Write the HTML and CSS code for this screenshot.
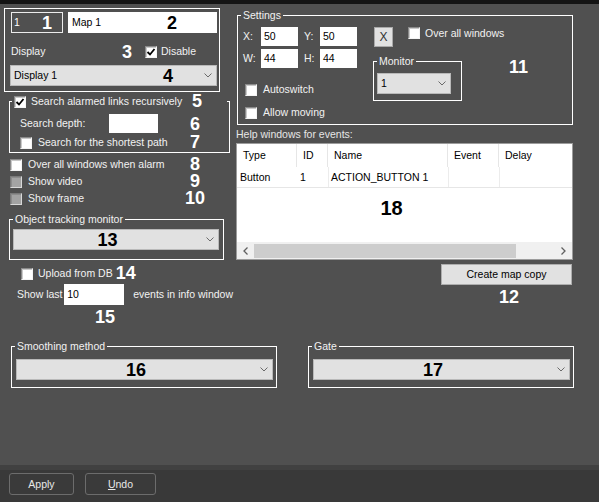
FILE: index.html
```html
<!DOCTYPE html>
<html lang="en">
<head>
<meta charset="utf-8">
<title>Map settings</title>
<link rel="stylesheet" href="styles.css">
</head>
<body>
<div class="page">
  <div class="topband"></div>
  <div class="main">
    <div class="leftcol">
      <div class="mapbox">
        <div class="r1">
          <div class="field dark"><span>1</span><span class="num wnum n1">1</span></div>
          <div class="field light"><span>Map 1</span><span class="num bnum n2">2</span></div>
        </div>
        <div class="r2">
          <span class="display-lbl">Display</span>
          <span class="num wnum numc">3</span>
          <span class="cb checked"><svg viewBox="0 0 10 10" width="10" height="10"><path d="M1.5 5 L4 7.5 L8.5 2" fill="none" stroke="#000" stroke-width="1.8"/></svg></span>
          <span class="cb-text">Disable</span>
        </div>
        <div class="combo combo-display">
          <span class="combo-val left">Display 1</span>
          <span class="num bnum n4">4</span>
          <span class="arrow"><svg viewBox="0 0 8 5" width="8" height="5"><polyline points="0.5,0.5 4,4 7.5,0.5" fill="none" stroke="#6a6a6a" stroke-width="1"/></svg></span>
        </div>
      </div>

      <fieldset class="grp grp-search">
        <legend class="lg-search">
          <div class="lg-inner">
            <span class="cb checked"><svg viewBox="0 0 10 10" width="10" height="10"><path d="M1.5 5 L4 7.5 L8.5 2" fill="none" stroke="#000" stroke-width="1.8"/></svg></span>
            <span class="cb-text gap5">Search alarmed links recursively</span>
            <span class="num wnum numc auto">5</span>
          </div>
        </legend>
        <div class="search-body">
          <div class="row depth">
            <span class="depth-lbl">Search depth:</span>
            <span class="input depth-input"></span>
            <span class="num wnum numc auto">6</span>
          </div>
          <div class="row shortest">
            <span class="cb"></span>
            <span class="cb-text gap6">Search for the shortest path</span>
            <span class="num wnum numc auto">7</span>
          </div>
        </div>
      </fieldset>

      <div class="cbrow first"><span class="cb"></span><span class="cb-text gap6">Over all windows when alarm</span><span class="num wnum numc auto">8</span></div>
      <div class="cbrow"><span class="cb dis"></span><span class="cb-text gap6">Show video</span><span class="num wnum numc auto">9</span></div>
      <div class="cbrow"><span class="cb dis"></span><span class="cb-text gap6">Show frame</span><span class="num wnum numc auto">10</span></div>

      <fieldset class="grp grp-track">
        <legend>Object tracking monitor</legend>
        <div class="track-body">
          <div class="combo combo-track">
            <span class="combo-val center"><span class="num bnum">13</span></span>
            <span class="arrow"><svg viewBox="0 0 8 5" width="8" height="5"><polyline points="0.5,0.5 4,4 7.5,0.5" fill="none" stroke="#6a6a6a" stroke-width="1"/></svg></span>
          </div>
        </div>
      </fieldset>

      <div class="row upload"><span class="cb"></span><span class="cb-text gap5">Upload from DB</span><span class="num wnum n14">14</span></div>
      <div class="row showlast">
        <span class="showlast-lbl">Show last</span>
        <span class="input showlast-input">10</span>
        <span class="events-lbl">events in info window</span>
      </div>
      <div class="n15 num wnum">15</div>
    </div>

    <div class="rightcol">
      <fieldset class="grp grp-settings">
        <legend>Settings</legend>
        <div class="settings-body">
          <div class="colA">
            <div class="xy">
              <span class="xy-lbl">X:</span><span class="input xy-input">50</span>
              <span class="xy-lbl second">Y:</span><span class="input xy-input">50</span>
            </div>
            <div class="xy wh">
              <span class="xy-lbl">W:</span><span class="input xy-input">44</span>
              <span class="xy-lbl second">H:</span><span class="input xy-input">44</span>
            </div>
            <div class="row optrow auto-sw"><span class="cb"></span><span class="cb-text gap6">Autoswitch</span></div>
            <div class="row optrow allow"><span class="cb"></span><span class="cb-text gap6">Allow moving</span></div>
          </div>
          <div class="colB">
            <div class="colB-top">
              <span class="xbtn">X</span>
              <span class="row overall"><span class="cb"></span><span class="cb-text gap5">Over all windows</span></span>
            </div>
            <fieldset class="grp grp-monitor">
              <legend>Monitor</legend>
              <div class="monitor-body">
                <div class="combo combo-monitor">
                  <span class="combo-val left">1</span>
                  <span class="arrow"><svg viewBox="0 0 8 5" width="8" height="5"><polyline points="0.5,0.5 4,4 7.5,0.5" fill="none" stroke="#6a6a6a" stroke-width="1"/></svg></span>
                </div>
              </div>
            </fieldset>
          </div>
          <div class="colC"><span class="num wnum">11</span></div>
        </div>
      </fieldset>

      <div class="help-lbl">Help windows for events:</div>
      <div class="table">
        <div class="trow thead">
          <span class="th">Type</span><span class="th">ID</span><span class="th">Name</span><span class="th">Event</span><span class="th last">Delay</span>
        </div>
        <div class="trow tdata">
          <span class="td">Button</span><span class="td">1</span><span class="td sep">ACTION_BUTTON 1</span><span class="td sep"></span><span class="td sep"></span>
        </div>
        <div class="tempty"><span class="num bnum n18">18</span></div>
        <div class="hscroll">
          <span class="sarrow"><svg viewBox="0 0 5 8" width="5" height="8"><polyline points="4.5,0.5 1,4 4.5,7.5" fill="none" stroke="#606060" stroke-width="1.3"/></svg></span>
          <span class="sthumb"></span>
          <span class="strack"></span>
          <span class="sarrow"><svg viewBox="0 0 5 8" width="5" height="8"><polyline points="0.5,0.5 4,4 0.5,7.5" fill="none" stroke="#606060" stroke-width="1.3"/></svg></span>
        </div>
      </div>
      <div class="copybtn">Create map copy</div>
      <div class="n12 num wnum">12</div>
    </div>
  </div>

  <div class="groups">
    <fieldset class="grp grp-bottom">
      <legend>Smoothing method</legend>
      <div class="bottom-body">
        <div class="combo combo-wide">
          <span class="combo-val center"><span class="num bnum">16</span></span>
          <span class="arrow"><svg viewBox="0 0 8 5" width="8" height="5"><polyline points="0.5,0.5 4,4 7.5,0.5" fill="none" stroke="#6a6a6a" stroke-width="1"/></svg></span>
        </div>
      </div>
    </fieldset>
    <fieldset class="grp grp-bottom">
      <legend>Gate</legend>
      <div class="bottom-body">
        <div class="combo combo-wide">
          <span class="combo-val center"><span class="num bnum">17</span></span>
          <span class="arrow"><svg viewBox="0 0 8 5" width="8" height="5"><polyline points="0.5,0.5 4,4 7.5,0.5" fill="none" stroke="#6a6a6a" stroke-width="1"/></svg></span>
        </div>
      </div>
    </fieldset>
  </div>

  <div class="footer">
    <span class="fbtn apply">Apply</span>
    <span class="fbtn undo"><u>U</u>ndo</span>
  </div>
</div>
</body>
</html>
```

FILE: styles.css
```css
* { box-sizing: border-box; }
html, body { margin: 0; padding: 0; }
body {
  width: 599px;
  height: 502px;
  overflow: hidden;
  background: #505050;
  font-family: "Liberation Sans", Arial, sans-serif;
  font-size: 10.5px;
  line-height: 13px;
  color: #f2f2f2;
}
.page { display: flex; flex-direction: column; height: 502px; }
.topband { height: 4px; background: #141414; flex: none; }
.main { display: flex; height: 336px; flex: none; }

/* generic */
.grp { margin: 0; padding: 0; border: 1px solid #fff; min-width: 0; }
.grp > legend { padding: 0 2px; margin-left: 3px; height: 13px; line-height: 13px; color: #f2f2f2; }

.num { font-weight: bold; font-size: 18px; line-height: 18px; white-space: nowrap; }
.wnum { color: #fff; }
.bnum { color: #000; }
.numc { width: 24px; text-align: center; flex: none; }
.auto { margin-left: auto; }
.row { display: flex; align-items: center; white-space: nowrap; }
.cb {
  width: 12px; height: 12px; flex: none;
  background: #fff;
  border: 1px solid;
  border-color: #8a8a8a #f4f4f4 #f4f4f4 #8a8a8a;
  box-shadow: inset 1px 1px 0 #c9c9c9;
  display: flex; align-items: center; justify-content: center;
}
.cb svg { display: block; }
.cb.dis { background: #a3a3a3; box-shadow: inset 1px 1px 0 #8c8c8c; border-color: #7a7a7a #d8d8d8 #d8d8d8 #7a7a7a; }
.cb-text { white-space: nowrap; }
.gap5 { margin-left: 5px; }
.gap6 { margin-left: 6px; }
.input { background: #fff; color: #000; display: flex; align-items: center; padding-left: 3px; flex: none; }

.combo {
  display: flex; align-items: center;
  background: #e1e1e1;
  border: 1px solid #b9b9b9;
  color: #000;
}
.combo-val { flex: 1; white-space: nowrap; }
.combo-val.left { padding-left: 3px; }
.combo-val.center { text-align: center; }
.arrow { width: 17px; flex: none; display: flex; align-items: center; justify-content: center; }
.arrow svg { display: block; }

/* left column */
.leftcol { width: 233px; padding-left: 4px; flex: none; }
.mapbox {
  margin-top: 4px;
  width: 216px; height: 84px;
  border: 1px solid #fff;
  padding: 3px 0 0 6px;
}
.r1 { display: flex; gap: 5px; height: 21px; }
.field { height: 21px; display: flex; align-items: center; flex: none; }
.field.dark { width: 52px; border: 1px solid #ececec; padding-left: 2px; color: #fff; }
.field.light { width: 149px; background: #fff; color: #000; padding-left: 4px; }
.n1 { margin-left: auto; margin-right: 10px; }
.n2 { margin-left: auto; margin-right: 40px; }
.r2 { display: flex; align-items: center; height: 13px; margin-top: 12px; }
.display-lbl { width: 104px; }
.r2 .cb { margin-left: 6px; }
.r2 .cb-text { margin-left: 4px; }
.combo-display { margin: 7px 0 0 -1px; width: 207px; height: 21px; }
.combo-display .combo-val { flex: none; }
.n4 { margin-left: auto; margin-right: 26px; }

.grp-search { margin: 3px 0 0 5px; width: 221px; }
.grp > legend.lg-search { width: 215px; margin-left: 2px; }
.lg-inner { display: flex; align-items: center; height: 13px; padding-right: 16px; }
.lg-inner .num { line-height: 13px; }
.search-body { padding: 0 0 2px 10px; }
.depth { margin-top: 6px; height: 19px; width: 187px; }
.depth-lbl { width: 89px; }
.depth-input { width: 49px; height: 19px; }
.shortest { margin-top: 2px; height: 15px; width: 187px; }
.shortest .num { line-height: 15px; }

.cbrow { display: flex; align-items: center; height: 17px; width: 203px; padding-left: 6px; white-space: nowrap; }
.cbrow .num { line-height: 17px; }
.cbrow.first { margin-top: 3px; }

.grp-track { margin: 6px 0 0 5px; width: 215px; }
.track-body { padding: 3px 0 9px 3px; }
.combo-track { width: 206px; height: 21px; }

.upload { margin-top: 5px; height: 17px; padding-left: 17px; }
.upload .num { line-height: 17px; }
.n14 { margin-left: 3px; }
.showlast { margin-top: 2px; height: 21px; padding-left: 13px; }
.showlast-lbl { width: 57px; }
.showlast-input { width: 60px; height: 21px; }
.events-lbl { margin-left: 9px; }
.n15 { margin: 3px 0 0 91px; }

/* right column */
.rightcol { width: 336px; margin-left: 4px; padding-top: 5px; flex: none; }
.grp-settings { width: 336px; }
.settings-body { display: flex; align-items: flex-start; padding: 5px 0 3px 5px; }
.colA { width: 114px; flex: none; }
.xy { display: flex; align-items: center; height: 19px; }
.xy.wh { margin-top: 3px; }
.xy-lbl { width: 18px; flex: none; }
.xy-lbl.second { width: 22px; padding-left: 6px; }
.xy-input { width: 37px; height: 19px; }
.optrow { height: 17px; padding-left: 2px; }
.auto-sw { margin-top: 13px; }
.allow { margin-top: 6px; }

.colB { width: 89px; margin-left: 16px; flex: none; }
.colB-top { display: flex; align-items: flex-start; height: 20px; }
.xbtn {
  width: 19px; height: 20px; margin-left: 1px; flex: none;
  background: #e1e1e1; border: 1px solid #a9a9a9;
  color: #333; font-size: 12px;
  display: flex; align-items: center; justify-content: center;
}
.overall { margin-left: 15px; height: 12px; overflow: visible; }
.grp-monitor { margin-top: 8px; width: 89px; }
.monitor-body { padding: 5px 0 6px 3px; }
.combo-monitor { width: 74px; height: 21px; }

.colC { margin: 31px 0 0 47px; }

.help-lbl { margin: 3px 0 0 -1px; height: 13px; color: #e6e6e6; }
.table {
  margin: 2px 0 0 -1px;
  width: 337px; height: 117px;
  background: #fff; border: 1px solid #9c9c9c;
  display: flex; flex-direction: column;
  color: #000;
}
.trow { display: grid; grid-template-columns: 60px 31px 120px 51px 1fr; }
.thead { height: 23px; }
.th { border-right: 1px solid #e6e6e6; padding-left: 6px; display: flex; align-items: center; }
.th.last { border-right: 0; }
.tdata { height: 21px; border-bottom: 1px solid #e6e6e6; }
.td { padding-left: 3px; display: flex; align-items: center; white-space: nowrap; }
.td.sep { border-left: 1px solid #ececec; padding-left: 2px; }
.tempty { flex: 1; padding: 10px 26px 0 0; text-align: center; }
.n18 { font-size: 20px; line-height: 20px; }
.hscroll { height: 17px; display: flex; background: #f0f0f0; flex: none; }
.sarrow { width: 17px; flex: none; display: flex; align-items: center; justify-content: center; }
.sthumb { width: 262px; margin: 2px 0 1px; background: #cdcdcd; }
.strack { flex: 1; }

.copybtn {
  margin: 4px 0 0 204px;
  width: 131px; height: 21px;
  background: #e1e1e1; border: 1px solid #adadad;
  color: #000;
  display: flex; align-items: center; justify-content: center;
}
.n12 { margin: 3px 0 0 262px; }

/* bottom groups */
.groups { display: flex; gap: 31px; padding-left: 11px; flex: none; }
.grp-bottom { width: 266px; }
.bottom-body { padding: 6px 0 7px 4px; }
.combo-wide { width: 257px; height: 21px; }

/* footer */
.footer {
  margin-top: auto;
  height: 37px;
  flex: none;
  background: #393939;
  border-top: 5px solid #414141;
  padding: 3px 0 0 9px;
  display: flex; gap: 11px; align-items: flex-start;
}
.fbtn {
  height: 22px;
  border: 1px solid #6c6c6c;
  border-radius: 3px;
  background: #3a3a3a;
  color: #e8e8e8;
  display: flex; align-items: center; justify-content: center;
}
.apply { width: 65px; }
.undo { width: 71px; }
.undo u { text-decoration: underline; }
```
